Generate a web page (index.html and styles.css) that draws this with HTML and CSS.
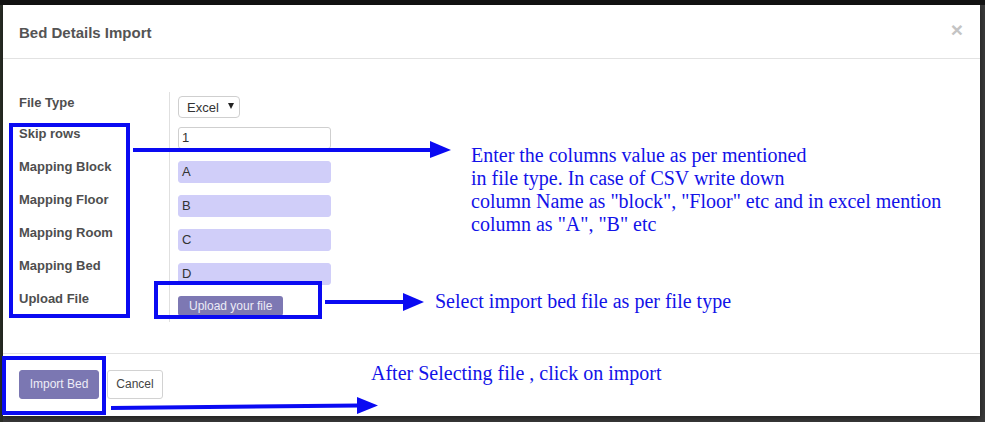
FILE: index.html
```html
<!DOCTYPE html>
<html>
<head>
<meta charset="utf-8">
<link rel="stylesheet" href="styles.css">
</head>
<body>
<div class="page">
  <div class="topbar"></div>
  <div class="modal">
    <div class="modal-header">
      <h4 class="modal-title">Bed Details Import</h4>
      <span class="close">×</span>
    </div>
    <div class="modal-body">
      <div class="labels">
        <div class="row row-first"><span class="label">File Type</span></div>
        <div class="row"><span class="label">Skip rows</span></div>
        <div class="row"><span class="label">Mapping Block</span></div>
        <div class="row"><span class="label">Mapping Floor</span></div>
        <div class="row"><span class="label">Mapping Room</span></div>
        <div class="row"><span class="label">Mapping Bed</span></div>
        <div class="row row-last"><span class="label">Upload File</span></div>
      </div>
      <div class="fields">
        <div class="row row-first">
          <div class="select"><span>Excel</span><span class="caret"></span></div>
        </div>
        <div class="row"><div class="input">1</div></div>
        <div class="row"><div class="input filled">A</div></div>
        <div class="row"><div class="input filled">B</div></div>
        <div class="row"><div class="input filled">C</div></div>
        <div class="row"><div class="input filled">D</div></div>
        <div class="row row-last"><div class="btn-upload">Upload your file</div></div>
      </div>
    </div>
    <div class="modal-footer">
      <div class="btn btn-primary">Import Bed</div>
      <div class="btn btn-default">Cancel</div>
    </div>
  </div>

  <div class="anno-box box-labels"></div>
  <div class="anno-box box-upload"></div>
  <div class="anno-box box-import"></div>

  <svg class="arrows" width="985" height="422" viewBox="0 0 985 422">
    <line x1="133" y1="150" x2="432" y2="150" stroke="#0a0af2" stroke-width="4"/>
    <polygon points="430,141 451,150 430,158" fill="#0a0af2"/>
    <line x1="325" y1="302" x2="405" y2="302" stroke="#0a0af2" stroke-width="4"/>
    <polygon points="403,293 424,302 403,311" fill="#0a0af2"/>
    <line x1="111" y1="408" x2="359" y2="405.5" stroke="#0a0af2" stroke-width="4"/>
    <polygon points="357,397 378,405.5 357,414" fill="#0a0af2"/>
  </svg>

  <div class="note note-columns">Enter the columns value as per mentioned<br>in file type. In case of CSV write down<br>column Name as "block", "Floor" etc and in excel mention<br>column as "A", "B" etc</div>
  <div class="note note-upload">Select import bed file as per file type</div>
  <div class="note note-import">After Selecting file , click on import</div>
</div>
</body>
</html>
```

FILE: styles.css
```css
* { box-sizing: border-box; }

html, body {
  margin: 0;
  padding: 0;
  background: #3a3a3a;
}

body {
  font-family: "Liberation Sans", Arial, sans-serif;
  width: 985px;
  height: 422px;
  overflow: hidden;
}

.page {
  position: relative;
  width: 985px;
  height: 422px;
  background: linear-gradient(to right, #2c3028 0, #2c3028 3px, #3a3a3a 3px);
}

.topbar {
  height: 5px;
  background: #131313;
}

.modal {
  margin-left: 3px;
  width: 977px;
  height: 411px;
  background: #fff;
  display: flex;
  flex-direction: column;
  box-shadow: 0 2px 6px rgba(0,0,0,0.5);
}

.modal-header {
  height: 54px;
  border-bottom: 1px solid #e2e2e2;
  display: flex;
  align-items: center;
  justify-content: space-between;
  padding: 0 16px 0 16px;
}

.modal-title {
  margin: 0;
  font-size: 15px;
  font-weight: bold;
  color: #545454;
  padding-top: 1px;
}

.close {
  font-size: 21px;
  font-weight: bold;
  color: #c4c4c4;
  line-height: 1;
  margin-top: -4px;
  margin-right: 1px;
}

.modal-body {
  height: 294px;
  padding: 33px 16px 35px 16px;
  display: flex;
  align-items: flex-start;
}

.labels {
  width: 150px;
  padding-top: 4px;
}

.fields {
  border-left: 1px solid #e0e0e0;
  padding: 4px 0 6px 8px;
}

.row {
  height: 33px;
}

.row-first { height: 31px; }
.row-last { height: 20px; }

.label {
  display: block;
  font-size: 13px;
  line-height: 13px;
  font-weight: bold;
  color: #4e4e4e;
}

.select {
  width: 62px;
  height: 22px;
  border: 1px solid #cfcfcf;
  border-radius: 4px;
  display: flex;
  align-items: center;
  padding-left: 8px;
  font-size: 13px;
  color: #333;
}

.caret {
  width: 0;
  height: 0;
  border-left: 3.5px solid transparent;
  border-right: 3.5px solid transparent;
  border-top: 6px solid #222;
  margin-left: 9px;
  margin-top: -2px;
}

.input {
  width: 153px;
  height: 22px;
  border: 1px solid #cfcfcf;
  border-radius: 3px;
  padding-left: 3px;
  font-size: 13px;
  line-height: 20px;
  color: #333;
}

.input.filled {
  background: #d0cef9;
  border-color: #d0cef9;
  margin-top: 1px;
}

.btn-upload {
  display: inline-block;
  height: 20px;
  padding: 0 11px;
  background: #7d78b3;
  border-radius: 3px;
  color: #ecebf6;
  font-size: 12px;
  line-height: 20px;
}

.modal-footer {
  flex: 1;
  border-top: 1px solid #e2e2e2;
  padding: 16px 16px 0 16px;
  display: flex;
  align-items: flex-start;
  gap: 8px;
}

.btn {
  height: 29px;
  border-radius: 3px;
  font-size: 12px;
  line-height: 27px;
  padding: 0;
  border: 1px solid transparent;
  white-space: nowrap;
  text-align: center;
}

.btn-primary {
  width: 80px;
  background: #7b77b2;
  border-color: #7b77b2;
  color: #eeedf7;
}

.btn-default {
  width: 56px;
  background: #fff;
  border-color: #d2d2d2;
  color: #444;
}

.anno-box {
  position: absolute;
  border: 4px solid #0a0af2;
}

.box-labels { left: 9px; top: 123px; width: 121px; height: 195px; }
.box-upload { left: 154px; top: 281px; width: 168px; height: 38px; }
.box-import { left: 2px; top: 356px; width: 104px; height: 59px; }

.arrows {
  position: absolute;
  left: 0;
  top: 0;
}

.note {
  position: absolute;
  font-family: "Liberation Serif", "Times New Roman", serif;
  font-size: 20px;
  line-height: 23px;
  color: #1212e8;
  white-space: nowrap;
}

.note-columns { left: 471px; top: 144px; }
.note-upload { left: 435px; top: 290px; }
.note-import { left: 371px; top: 362px; }
```
